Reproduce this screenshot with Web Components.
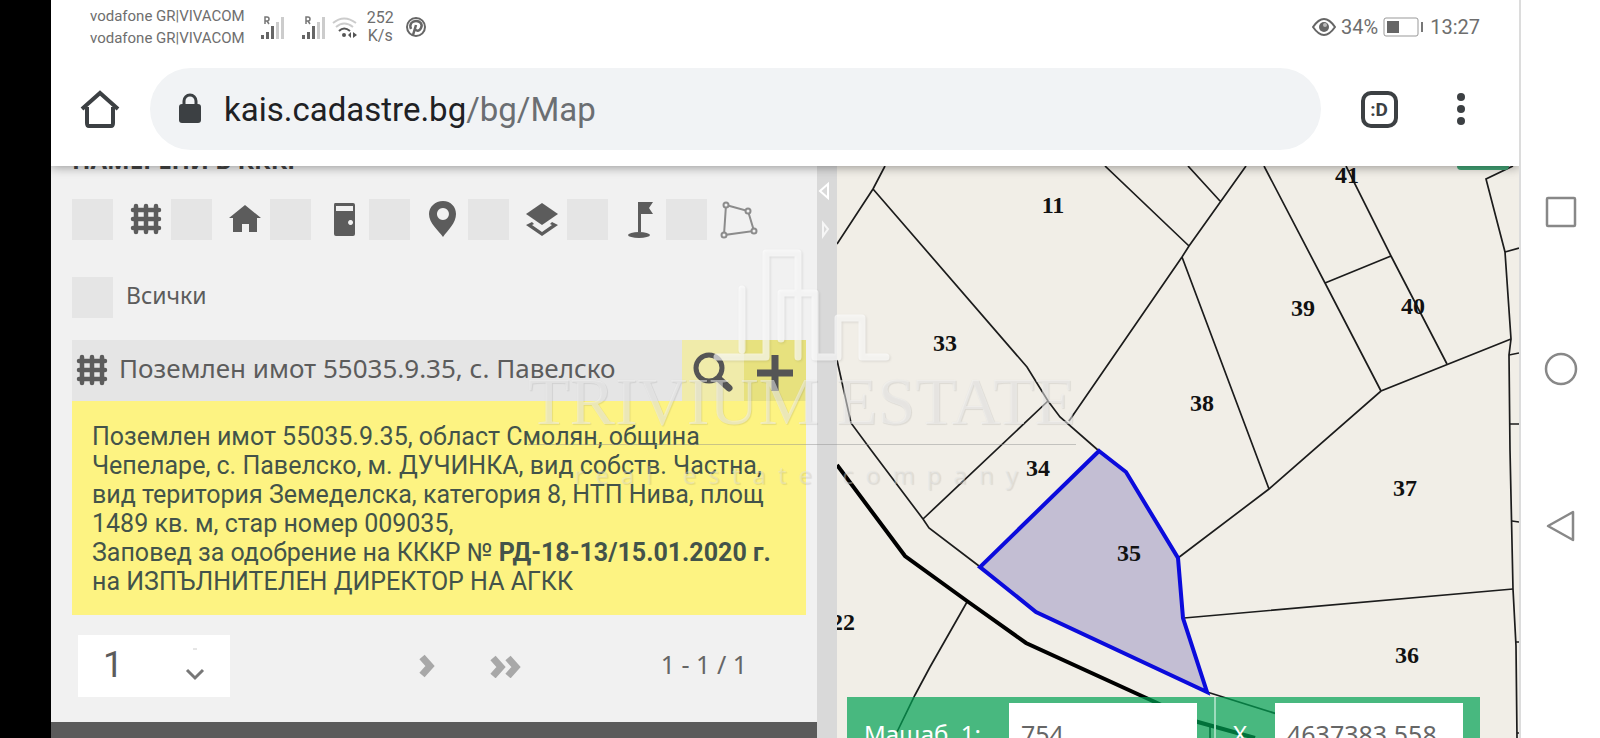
<!DOCTYPE html>
<html lang="bg">
<head>
<meta charset="utf-8">
<title>КАИС – Карта</title>
<style>
  html, body { margin: 0; height: 100%; }
  body { background: #000; overflow: hidden; font-family: Roboto, sans-serif; color: #5c5c5c; }
</style>
</head>
<body>
<phone-frame>
  <status-bar slot="top"></status-bar>
  <browser-bar slot="top"></browser-bar>
  <results-panel slot="page">
    <span slot="heading">НАМЕРЕНИ В КККР</span>
    <filter-item slot="filter" label="Поземлени имоти" icon="grid"></filter-item>
    <filter-item slot="filter" label="Сгради" icon="house"></filter-item>
    <filter-item slot="filter" label="Самостоятелни обекти" icon="door"></filter-item>
    <filter-item slot="filter" label="Адреси" icon="pin"></filter-item>
    <filter-item slot="filter" label="Слоеве" icon="layers"></filter-item>
    <filter-item slot="filter" label="Геодезически точки" icon="flag"></filter-item>
    <filter-item slot="filter" label="Полигон" icon="polygon"></filter-item>
    <filter-item slot="all">Всички</filter-item>
    <result-card slot="result">
      <span slot="title">Поземлен имот 55035.9.35, с. Павелско</span>
      Поземлен имот 55035.9.35, област Смолян, община Чепеларе, с. Павелско, м. ДУЧИНКА, вид собств. Частна, вид територия Земеделска, категория 8, НТП Нива, площ 1489 кв. м, стар номер 009035,<br>Заповед за одобрение на КККР № <b>РД-18-13/15.01.2020 г.</b> на ИЗПЪЛНИТЕЛЕН ДИРЕКТОР НА АГКК
    </result-card>
    <page-pager slot="pager">1 - 1 / 1</page-pager>
  </results-panel>
  <split-bar slot="page"></split-bar>
  <cadastre-map slot="page"><coords-bar></coords-bar></cadastre-map>
  <nav-rail slot="rail"></nav-rail>
</phone-frame>
<water-mark></water-mark>

<script>
const define = (name, html, setup) => customElements.define(name, class extends HTMLElement {
  constructor() {
    super();
    this.attachShadow({ mode: 'open' }).innerHTML = html;
  }
  connectedCallback() { if (setup) setup(this, this.shadowRoot); }
});

const GRID = '<svg width="40" height="40" viewBox="0 0 40 40" aria-hidden="true"><path d="M10 7v26M20 7v26M30 7v26M7 11h26M7 20h26M7 29h26" stroke="#5c5c5c" stroke-width="4.500" fill="none" stroke-linecap="round"/></svg>';

const ICONS = {
  grid: GRID,
  house: '<svg width="40" height="40" viewBox="0 0 40 40"><path d="M20 6L36 19H32V33H24V25H17V33H8V19H4Z" fill="#5c5c5c"/></svg>',
  door: '<svg width="40" height="40" viewBox="0 0 40 40"><path fill-rule="evenodd" d="M11 4H29Q31 4 31 6V35Q31 37 29 37H12Q10 37 10 35V6Q10 4 11 4ZM12 7V12H29V7ZM26.500 21a2.500 2.500 0 1 0 .1 0Z" fill="#5c5c5c"/></svg>',
  pin: '<svg width="40" height="40" viewBox="0 0 40 40"><path fill-rule="evenodd" d="M20 2C12 2 6 8 6 15C6 24 15 31 20 38C25 31 33 24 33 15C33 8 28 2 20 2ZM20 9a6 6 0 1 1-.1 0Z" fill="#5c5c5c"/></svg>',
  layers: '<svg width="40" height="40" viewBox="0 0 40 40"><path d="M20 4L36 15L20 26L4 15Z" fill="#5c5c5c"/><path d="M10 23L4 26L20 37L36 26L30 23L28 25L30 26L20 33L10 26L12 25Z" fill="#5c5c5c"/></svg>',
  flag: '<svg width="40" height="40" viewBox="0 0 40 40"><path d="M17 3H32L28 9L32 15H20V33H17Z" fill="#5c5c5c"/><ellipse cx="18" cy="36" rx="11" ry="3" fill="#5c5c5c"/></svg>',
  polygon: '<svg width="40" height="40" viewBox="0 0 40 40"><g fill="#f1f1f1" stroke="#8c8c8c" stroke-width="2"><path d="M6 6L28 12L34 32L4 36Z"/><circle cx="6" cy="6" r="2.500"/><circle cx="28" cy="12" r="2.500"/><circle cx="34" cy="32" r="2.500"/><circle cx="4" cy="36" r="2.500"/></g></svg>'
};

const SIGNAL = '<svg class="sig" width="24" height="26" viewBox="0 0 24 26"><path d="M4 10V3h2a2 2 0 0 1 0 4H4M6 7l2 3" stroke="#777" stroke-width="1.500" fill="none"/><path d="M0 21h3v4H0zM5 18h3v7H5zM10 12h3v13h-3z" fill="#666"/><path d="M15 8h3v17h-3zM20 3h3v22h-3z" fill="#ccc"/></svg>';

define('phone-frame', `
<style>
  :host { display: grid; grid-template-columns: 51px 1fr 81px; height: 100vh; background: #000; }
  .screen { grid-column: 2; display: flex; flex-direction: column; min-width: 0; min-height: 0; background: #fff; }
  .bars { z-index: 1; background: #fff; box-shadow: 0 1px 10px rgba(0, 0, 0, .4); clip-path: inset(0 0 -20px 0); }
  .page { flex: 1; min-height: 0; display: grid; grid-template-columns: minmax(0, 766fr) 20px minmax(0, 682fr); grid-template-rows: minmax(0, 1fr); }
</style>
<div class="screen">
  <header class="bars"><slot name="top"></slot></header>
  <main class="page"><slot name="page"></slot></main>
</div>
<slot name="rail"></slot>`);

define('status-bar', `
<style>
  :host { display: flex; align-items: center; height: 54px; padding: 0 39px; color: #6e6e6e; }
  .ops { font-size: 15px; line-height: 22px; white-space: nowrap; }
  .sig { margin-left: 16px; }
  .sig + .sig { margin-left: 17px; }
  .wifi { margin-left: 6px; }
  .rate { margin: 0 12px 0 9px; font-size: 16px; line-height: 18px; text-align: center; }
  .right { margin-left: auto; display: flex; align-items: center; font-size: 20px; gap: 5px; }
</style>
<div class="ops">vodafone GR|VIVACOM<br>vodafone GR|VIVACOM</div>
${SIGNAL}
${SIGNAL}
<svg class="wifi" width="26" height="24" viewBox="0 0 26 24"><g fill="none" stroke-width="2"><path d="M1 8Q12-1 24 8M4 12Q12 5 21 12" stroke="#ccc"/><path d="M7 16Q12 11 18 16" stroke="#555"/></g><circle cx="12" cy="20" r="2" fill="#555"/><path d="M19 17v6l-3-3zM21 17v6l4-3z" fill="#555"/></svg>
<div class="rate">252<br>K/s</div>
<svg width="20" height="20" viewBox="0 0 20 20"><circle cx="10" cy="10" r="9" fill="#fff" stroke="#666" stroke-width="2"/><path d="M5 12C3 7 6 4 10 4S17 7 15 11S10 14 9 12M10 8L7 18" fill="none" stroke="#666" stroke-width="2.500"/></svg>
<div class="right">
  <svg width="24" height="20" viewBox="0 0 24 20"><path d="M1 10Q12-6 23 10Q12 26 1 10Z" fill="none" stroke="#666" stroke-width="2"/><circle cx="12" cy="10" r="5" fill="#666"/><circle cx="13" cy="8" r="2" fill="#bbb"/></svg>
  <span>34%</span>
  <svg width="42" height="20" viewBox="0 0 42 20"><rect x="1" y="1" width="34" height="18" rx="2" fill="none" stroke="#999" stroke-width="1"/><rect x="4" y="4" width="12" height="12" fill="#666"/><rect x="38" y="5" width="2" height="10" fill="#777"/></svg>
  <span>13:27</span>
</div>`);

define('browser-bar', `
<style>
  :host { display: flex; align-items: center; height: 82px; padding: 14px 37px 16px 25px; }
  button { border: 0; background: none; padding: 0; font: inherit; display: flex; align-items: center; justify-content: center; flex: none; }
  .home { width: 48px; }
  .url { flex: 1; height: 82px; margin: 0 32px 0 26px; padding-left: 28px; border-radius: 41px; background: #f1f3f5; justify-content: flex-start; gap: 22px; font-size: 33px; color: #202124; white-space: nowrap; }
  .url i { font-style: normal; color: #6b6e72; }
  .tabs { width: 52px; }
  .tabs span { box-sizing: border-box; width: 37px; height: 37px; border: 4px solid #3c4043; border-radius: 10px; font-size: 19px; font-weight: 700; line-height: 29px; color: #3c4043; }
  .more { width: 42px; margin-left: 35px; }
</style>
<button class="home" aria-label="Начало"><svg width="40" height="40" viewBox="0 0 40 40"><path d="M2 20L20 4L38 20M7 18V34Q7 37 9 37H31Q33 37 33 34V18" fill="none" stroke="#3c4043" stroke-width="4"/></svg></button>
<button class="url"><svg width="24" height="32" viewBox="0 0 24 32"><rect x="1" y="11" width="22" height="19" rx="3" fill="#3c4043"/><path d="M6 12V8a6 6 0 0 1 12 0v4" fill="none" stroke="#3c4043" stroke-width="3"/></svg><span>kais.cadastre.bg<i>/bg/Map</i></span></button>
<button class="tabs" aria-label="Раздели"><span>:D</span></button>
<button class="more" aria-label="Меню"><svg width="10" height="36" viewBox="0 0 10 36"><g fill="#3c4043"><circle cx="5" cy="6" r="4"/><circle cx="5" cy="18" r="4"/><circle cx="5" cy="30" r="4"/></g></svg></button>`);

define('results-panel', `
<style>
  :host { display: flex; flex-direction: column; background: #f1f1f1; overflow: hidden; min-width: 0; }
  .inner { padding: 0 11px 0 21px; }
  h2 { margin: 0 0 29px; height: 4px; overflow: hidden; display: flex; align-items: flex-end; font: 700 24px/20px "Noto Sans", sans-serif; color: #444; }
  .filters { display: flex; }
  .all { margin: 37px 0 22px; display: flex; }
  footer { margin-top: auto; height: 16px; flex: none; background: #5b5b5b; }
</style>
<div class="inner">
  <h2><slot name="heading"></slot></h2>
  <div class="filters"><slot name="filter"></slot></div>
  <div class="all"><slot name="all"></slot></div>
  <slot name="result"></slot>
  <slot name="pager"></slot>
</div>
<footer></footer>`);

define('filter-item', `
<style>
  :host { display: flex; }
  label { display: flex; align-items: flex-start; gap: 13px; min-width: 99px; font: 23px/36px "Noto Sans", sans-serif; }
  input { appearance: none; margin: 0; width: 41px; height: 41px; background: #e5e5e5; flex: none; }
  svg { display: block; }
</style>
<label><input type="checkbox"><span id="icon"></span><slot></slot></label>`, (host, root) => {
  const icon = host.getAttribute('icon');
  const box = root.getElementById('icon');
  if (icon) {
    box.innerHTML = ICONS[icon];
    root.querySelector('input').setAttribute('aria-label', host.getAttribute('label'));
  } else box.remove();
});

define('result-card', `
<style>
  :host { display: block; }
  header { display: flex; height: 61px; background: #e5e5e5; align-items: stretch; }
  .icon { width: 40px; margin: 10px 7px 0 0; flex: none; }
  h3 { flex: 1; margin: 0; font: 26px/56px "Noto Sans", sans-serif; white-space: nowrap; }
  button { flex: none; width: 62px; padding: 0; border: 0; background: #f0ebaa; display: flex; align-items: center; justify-content: center; }
  .add { background: #e7e17e; }
  .body { padding: 21px 20px 19px; background: #fdf382; color: #43534a; font-size: 25px; line-height: 29px; }
</style>
<header>
  <span class="icon">${GRID}</span>
  <h3><slot name="title"></slot></h3>
  <button aria-label="Търсене"><svg width="44" height="44" viewBox="0 0 44 44"><circle cx="18" cy="19" r="13" fill="none" stroke="#555" stroke-width="5"/><path d="M28 30L38 39" stroke="#555" stroke-width="7" stroke-linecap="round"/></svg></button>
  <button class="add" aria-label="Добави"><svg width="40" height="46" viewBox="0 0 40 46"><path d="M2 25H38M20 7V43" stroke="#555" stroke-width="7"/></svg></button>
</header>
<div class="body"><slot></slot></div>`);

define('page-pager', `
<style>
  :host { display: flex; align-items: center; height: 62px; margin: 20px 59px 0 6px; font: 25px/32px "Noto Sans", sans-serif; color: #666; }
  .num { position: relative; width: 152px; height: 62px; }
  input { box-sizing: border-box; width: 100%; height: 100%; padding: 0 0 2px 25px; border: 0; background: #fff; font: 36px Roboto, sans-serif; color: #5c5c5c; }
  .num svg { position: absolute; right: 24px; top: 12px; pointer-events: none; }
  button { border: 0; background: none; padding: 0; display: flex; }
  .next { margin-left: 188px; }
  .last { margin-left: 51px; }
  span { margin-left: auto; padding-bottom: 4px; white-space: nowrap; }
</style>
<div class="num"><input type="text" value="1" aria-label="Страница"><svg width="22" height="36" viewBox="0 0 22 36"><path d="M9 2h4" stroke="#ccc" stroke-width="1"/><path d="M3 23L11 31L19 23" fill="none" stroke="#777" stroke-width="3"/></svg></div>
<button class="next" aria-label="Следваща"><svg width="20" height="24" viewBox="0 0 20 24"><path d="M4 3L12 12L4 21" fill="none" stroke="#a8a8a8" stroke-width="7"/></svg></button>
<button class="last" aria-label="Последна"><svg width="34" height="24" viewBox="0 0 34 24"><path d="M4 4L12 13L4 22M19 4L27 13L19 22" fill="none" stroke="#a8a8a8" stroke-width="7"/></svg></button>
<span><slot></slot></span>`);

define('split-bar', `
<style>
  :host { display: flex; flex-direction: column; background: #d9d9d9; padding: 15px 0 0 1px; gap: 18px; }
</style>
<svg width="14" height="20" viewBox="0 0 14 20"><path d="M10 3V17L2 10Z" fill="none" stroke="#fff" stroke-width="2"/></svg>
<svg width="14" height="20" viewBox="0 0 14 20"><path d="M5 4V17L10 10Z" fill="none" stroke="#f6f6f6" stroke-width="2"/></svg>`);

define('cadastre-map', `
<style>
  :host { display: block; position: relative; overflow: hidden; background: #f1eee7; min-width: 0; }
  svg { display: block; width: 100%; height: 100%; }
  text { font: 700 24px "Liberation Serif", serif; fill: #111; text-anchor: middle; }
  .tool { position: absolute; top: 0; right: 10px; width: 52px; height: 4px; border-radius: 0 0 4px 4px; background: #43a677; }
  ::slotted(coords-bar) { position: absolute; left: 10px; right: 39px; bottom: 0; }
</style>
<div class="tool"></div>
<svg viewBox="837 166 682 572" preserveAspectRatio="xMidYMid slice" role="img" aria-label="Кадастрална карта">
  <g fill="none" stroke="#1c1c1c" stroke-width="1.700">
    <path d="M885 166L873 189L837 244M873 189L1027 367L1048 401L1060 417L1099 451M1048 401L923 519"/>
    <path d="M1105 166L1189 246M1188 166L1220 201M1246 166L1189 246L1182 257L1069 421M1182 257L1269 489"/>
    <path d="M1264 166L1325 283L1381 391M1346 166L1391 256L1447 364M1325 283L1391 256"/>
    <path d="M1511 339L1381 391L1269 489L1178 558M1184 618L1513 589"/>
    <path d="M1513 166L1486 179L1505 252L1511 339L1509 355L1510 450L1513 589L1516 646L1517 738"/>
    <path d="M1505 252L1519 248M1509 355L1519 353M1510 424H1519M1512 521L1519 522M1516 642H1519M1517 733H1519"/>
    <path d="M837 360L851 423L871 450L923 519L929 528L979 566M967 602L930 667L915 695L897 732M1207 692L1290 718M1210 727V738"/>
  </g>
  <path d="M837 465L905 556L967 601L1026 643L1155 702L1198 722L1255 738" fill="none" stroke="#000" stroke-width="4"/>
  <path d="M1099 451L1126 472L1178 558L1183 618L1207 692L1036 612L980 567Z" fill="#c3bed3" stroke="#0b0bdc" stroke-width="4"/>
  <text x="1053" y="213">11</text><text x="945" y="351">33</text><text x="1202" y="411">38</text>
  <text x="1347" y="183">41</text><text x="1303" y="316">39</text><text x="1413" y="314">40</text>
  <text x="1038" y="476">34</text><text x="1129" y="561">35</text><text x="1405" y="496">37</text>
  <text x="1407" y="663">36</text><text x="843" y="630">22</text>
</svg>
<slot></slot>`);

define('coords-bar', `
<style>
  :host { display: grid; grid-template-columns: 367fr 266fr; align-items: start; height: 41px; overflow: hidden; background: rgba(0, 161, 83, .7); color: #fff; font: 24px/62px "Noto Sans", sans-serif; }
  .cell { display: flex; box-sizing: border-box; padding: 6px 17px 0; min-width: 0; }
  .x { border-left: 2px solid #9fdbbd; }
  label { flex: 1; white-space: pre; }
  input { box-sizing: border-box; width: 188px; height: 62px; padding: 0 12px; border: 0; background: #fff; font: 25px "Noto Sans", sans-serif; color: #666; }
</style>
<div class="cell"><label for="m">Мащаб  1:</label><input id="m" type="text" value="754"></div>
<div class="cell x"><label for="x">X</label><input id="x" type="text" value="4637383.558"></div>`);

define('nav-rail', `
<style>
  :host { grid-column: 3; display: flex; flex-direction: column; align-items: center; justify-content: center; gap: 121px; background: #fff; border-left: 2px solid #dcdcdc; }
  button { border: 0; background: none; padding: 0; width: 36px; height: 36px; }
  svg { display: block; }
</style>
<button aria-label="Приложения"><svg width="36" height="36" viewBox="0 0 36 36"><rect x="4" y="4" width="28" height="28" rx="1" fill="none" stroke="#888" stroke-width="2.500"/></svg></button>
<button aria-label="Начален екран"><svg width="36" height="36" viewBox="0 0 36 36"><circle cx="18" cy="18" r="15" fill="none" stroke="#888" stroke-width="2.500"/></svg></button>
<button aria-label="Назад"><svg width="36" height="36" viewBox="0 0 36 36"><path d="M30 4V32L5 18Z" fill="none" stroke="#888" stroke-width="2.500" stroke-linejoin="round"/></svg></button>`);

define('water-mark', `
<style>
  :host { position: absolute; inset: 0; z-index: 2; display: flex; flex-direction: column; align-items: center; justify-content: center; padding: 14px 0 0 4px; pointer-events: none; color: rgba(255, 255, 255, .5); text-shadow: 1px 1px 1px rgba(0, 0, 0, .08), 0 0 1px rgba(0, 0, 0, .08); }
  svg { display: block; filter: drop-shadow(1px 1px 1px rgba(0, 0, 0, .14)); }
  .name { margin-bottom: 9px; font: 68px/68px "Liberation Serif", serif; white-space: nowrap; }
  .rule { width: 548px; height: 1px; background: rgba(140, 140, 140, .45); }
  .tag { font: 24px/60px "Noto Sans", sans-serif; color: rgba(255, 255, 255, .35); letter-spacing: 12px; white-space: nowrap; }
</style>
<svg width="180" height="120" viewBox="711 247 180 120"><g fill="none" stroke="#fff" stroke-opacity=".65" stroke-width="7" stroke-linecap="round" stroke-linejoin="round"><path d="M716 357H765V253H797V357M741 289V350M780 339V293H814V357H832M837 357V318H861V357H885"/></g></svg>
<div class="name">TRIVIUM ESTATE</div>
<div class="rule"></div>
<div class="tag">real estate company</div>`);
</script>
</body>
</html>
